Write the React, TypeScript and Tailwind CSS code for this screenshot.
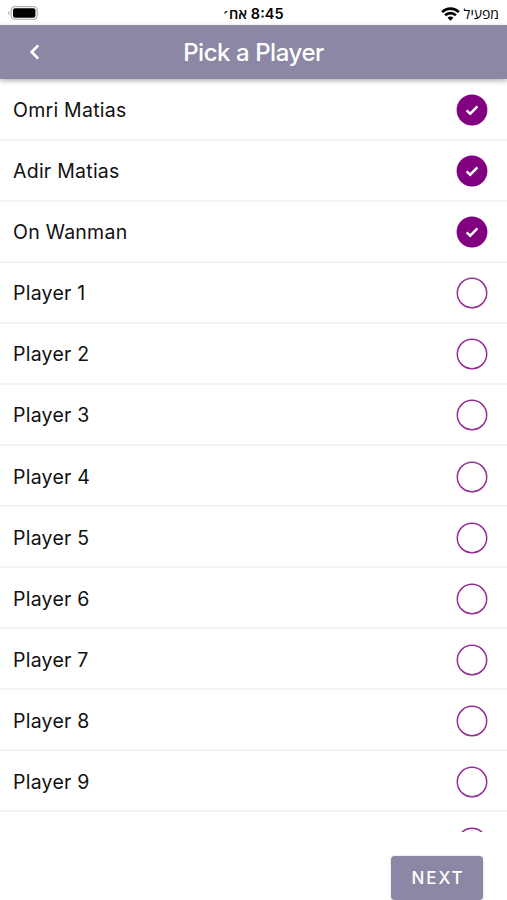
const players = [
  { name: 'Omri Matias', selected: true },
  { name: 'Adir Matias', selected: true },
  { name: 'On Wanman', selected: true },
  ...Array.from({ length: 9 }, (_, i) => ({ name: `Player ${i + 1}`, selected: false })),
];

function BatteryIcon() {
  return (
    <svg width="31" height="16" viewBox="0 0 31 16" aria-hidden="true">
      <rect x="4.2" y="1.6" width="26" height="12.8" rx="3.8" fill="#fff" stroke="#b5b5b5" strokeWidth="1.3" />
      <rect x="6" y="3.2" width="22.4" height="9.6" rx="2" fill="#000" />
      <path d="M2.4 6Q0 8 2.4 10.2Z" fill="#999" />
    </svg>
  );
}

function WifiIcon() {
  return (
    <svg width="19" height="14" viewBox="0 0 19 14" fill="none" stroke="#000" strokeWidth="2.6" aria-hidden="true">
      <path d="M1.1 5.1C5.8.5 13.2.5 17.9 5.1" />
      <path d="M4.1 8.3c3-2.9 7.8-2.9 10.8 0" />
      <path d="M6.5 10.7c1.7-1.6 4.3-1.6 6 0l-3 3Z" fill="#000" stroke="none" />
    </svg>
  );
}

function StatusBar() {
  return (
    <div className="flex h-[25px] shrink-0 items-start justify-between pr-[8px] pl-[7px] text-[14px] text-black">
      <div className="flex w-[100px] pt-[5px]">
        <BatteryIcon />
      </div>
      <div dir="rtl" className="pt-[4px] text-[14.5px] leading-[19px] font-semibold whitespace-nowrap">
        <span>8:45</span> <span>אח׳</span>
      </div>
      <div className="flex w-[100px] items-center justify-end gap-[4px] pt-[4px] leading-[18px]">
        <WifiIcon />
        <span dir="rtl" className="pt-px">מפעיל</span>
      </div>
    </div>
  );
}

function Radio({ selected }: { selected: boolean }) {
  return (
    <svg width="32" height="32" viewBox="0 0 32 32" fill="none" aria-hidden="true">
      {selected ? (
        <>
          <circle cx="16" cy="16" r="15.4" fill="#800080" />
          <path d="m10.6 16.3 3.6 3.4 7.2-7.3" stroke="#fff" strokeWidth="2.4" />
        </>
      ) : (
        <circle cx="16" cy="16" r="14.7" stroke="#933093" strokeWidth="1.5" />
      )}
    </svg>
  );
}

export default function App() {
  return (
    <div className="flex h-[900px] w-full flex-col overflow-hidden bg-white font-['Inter','Open_Sans','DejaVu_Sans',sans-serif]">
      <StatusBar />
      <header className="z-10 grid h-[54px] shrink-0 grid-cols-[100px_1fr_100px] items-center bg-[#8b87a5] text-white shadow-[0_2px_5px_rgba(0,0,0,0.3)]">
        <button aria-label="Back" className="pl-[29px]">
          <svg width="12" height="16" viewBox="0 0 12 16" fill="none" stroke="#fff" strokeWidth="2.7">
            <path d="M9.2 1.4 2.7 8l6.5 6.6" />
          </svg>
        </button>
        <h1 className="pt-[2px] text-center text-[24px] leading-[30px] font-medium tracking-[-0.45px] whitespace-nowrap">
          Pick a Player
        </h1>
      </header>
      <div className="h-[753px] shrink-0 overflow-hidden">
        <ul className="pt-[0.5px]">
          {players.map((player) => (
            <li
              key={player.name}
              className="flex h-[61.09px] items-center justify-between border-b-2 border-[#f3f3f3] pt-[2px] pr-[19px] pl-[13px]"
            >
              <span className="text-[19.5px] leading-[28px] tracking-[0.25px] text-[#111]">{player.name}</span>
              <Radio selected={player.selected} />
            </li>
          ))}
        </ul>
        <div className="flex justify-end pt-[15px] pr-[19px]">
          <Radio selected={false} />
        </div>
      </div>
      <footer className="flex flex-1 justify-end pt-[24px] pr-[24px]">
        <button className="h-[44px] w-[92px] rounded-[4px] bg-[#8b87a5] pt-[2px] pl-[2px] text-[17px] font-medium tracking-[1.9px] text-white shadow-[0_0_2px_rgba(0,0,0,0.25)]">
          NEXT
        </button>
      </footer>
    </div>
  );
}
